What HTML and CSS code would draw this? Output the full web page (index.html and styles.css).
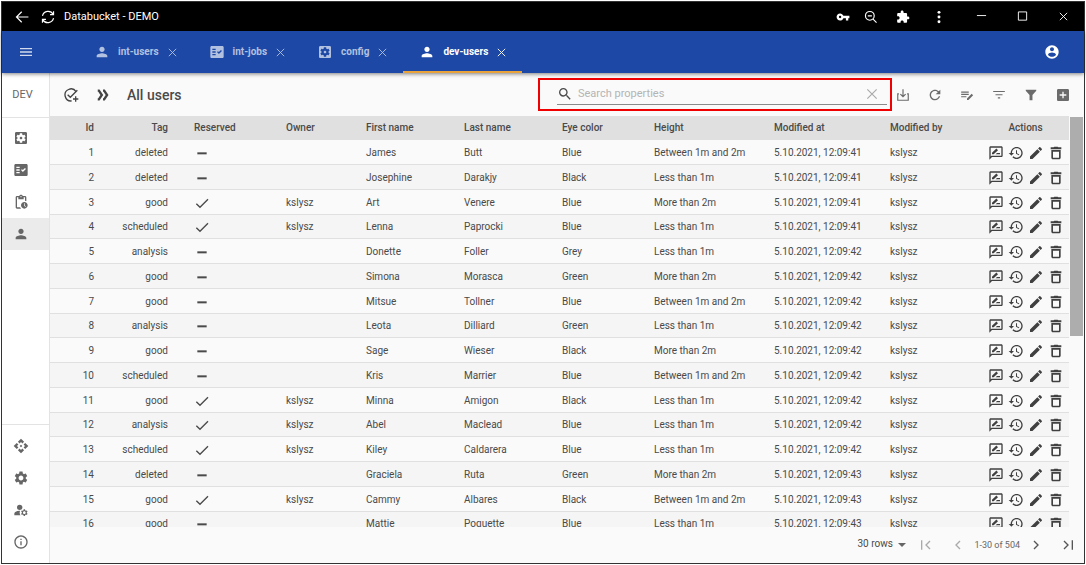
FILE: index.html
```html
<!DOCTYPE html>
<html lang="en">
<head>
<meta charset="utf-8">
<title>Databucket - DEMO</title>
<link rel="stylesheet" href="styles.css">
</head>
<body>
<svg class="sprite" aria-hidden="true">
  <symbol id="person" viewBox="0 0 24 24"><path d="M12 12c2.21 0 4-1.79 4-4s-1.79-4-4-4-4 1.79-4 4 1.79 4 4 4zm0 2c-2.67 0-8 1.34-8 4v2h16v-2c0-2.66-5.33-4-8-4z"/></symbol>
  <symbol id="factcheck" viewBox="0 0 24 24"><path fill-rule="evenodd" d="M20 3H4c-1.1 0-2 .9-2 2v14c0 1.1.9 2 2 2h16c1.1 0 2-.9 2-2V5c0-1.1-.9-2-2-2zM10 17H5v-2h5v2zm0-4H5v-2h5v2zm0-4H5V7h5v2zm4.82 6L12 12.16l1.41-1.41 1.41 1.42L17.99 9l1.42 1.42L14.82 15z"/></symbol>
  <symbol id="config" viewBox="0 0 24 24"><path d="M12 10c-1.1 0-2 .9-2 2s.9 2 2 2 2-.9 2-2-.9-2-2-2zm7-7H5c-1.11 0-2 .9-2 2v14c0 1.1.89 2 2 2h14c1.11 0 2-.9 2-2V5c0-1.1-.89-2-2-2zm-1.75 9c0 .23-.02.46-.05.68l1.48 1.16c.13.11.17.3.08.45l-1.4 2.42c-.09.15-.27.21-.43.15l-1.74-.7c-.36.28-.76.51-1.18.69l-.26 1.85c-.03.17-.18.3-.35.3h-2.8c-.17 0-.32-.13-.35-.29l-.26-1.85c-.43-.18-.82-.41-1.18-.69l-1.74.7c-.16.06-.34 0-.43-.15l-1.4-2.42c-.09-.15-.05-.34.08-.45l1.48-1.16c-.03-.23-.05-.46-.05-.69 0-.23.02-.46.05-.68l-1.48-1.16c-.13-.11-.17-.3-.08-.45l1.4-2.42c.09-.15.27-.21.43-.15l1.74.7c.36-.28.76-.51 1.18-.69l.26-1.85c.03-.17.18-.3.35-.3h2.8c.17 0 .32.13.35.29l.26 1.85c.43.18.82.41 1.18.69l1.74-.7c.16-.06.34 0 .43.15l1.4 2.42c.09.15.05.34-.08.45l-1.48 1.16c.03.23.05.46.05.69z"/></symbol>
  <symbol id="pending" viewBox="0 0 24 24"><path d="M17 12c-2.76 0-5 2.24-5 5s2.24 5 5 5 5-2.24 5-5-2.24-5-5-5zm1.65 7.35L16.5 17.2V14h1v2.79l1.85 1.85-.7.71zM18 3h-3.18C14.4 1.84 13.3 1 12 1s-2.4.84-2.82 2H6c-1.1 0-2 .9-2 2v15c0 1.1.9 2 2 2h6.11c-.59-.57-1.07-1.25-1.42-2H6V5h2v3h8V5h2v5.08c.71.1 1.38.31 2 .6V5c0-1.1-.9-2-2-2zm-6 2c-.55 0-1-.45-1-1s.45-1 1-1 1 .45 1 1-.45 1-1 1z"/></symbol>
  <symbol id="api" viewBox="0 0 24 24"><path d="M14 12l-2 2-2-2 2-2 2 2zm-2-6l2.12 2.12 2.5-2.5L12 1 7.38 5.62l2.5 2.5L12 6zm-6 6l2.12-2.12-2.5-2.5L1 12l4.62 4.62 2.5-2.5L6 12zm12 0l-2.12 2.12 2.5 2.5L23 12l-4.62-4.62-2.5 2.5L18 12zm-6 6l-2.12-2.12-2.5 2.5L12 23l4.62-4.62-2.5-2.5L12 18z"/></symbol>
  <symbol id="gear" viewBox="0 0 24 24"><path d="M19.14 12.94c.04-.3.06-.61.06-.94 0-.32-.02-.64-.07-.94l2.03-1.58c.18-.14.23-.41.12-.61l-1.92-3.32c-.12-.22-.37-.29-.59-.22l-2.39.96c-.5-.38-1.03-.7-1.62-.94l-.36-2.54c-.04-.24-.24-.41-.48-.41h-3.84c-.24 0-.43.17-.47.41l-.36 2.54c-.59.24-1.13.57-1.62.94l-2.39-.96c-.22-.08-.47 0-.59.22L2.74 8.87c-.12.21-.08.47.12.61l2.03 1.58c-.05.3-.09.63-.09.94s.02.64.07.94l-2.03 1.58c-.18.14-.23.41-.12.61l1.92 3.32c.12.22.37.29.59.22l2.39-.96c.5.38 1.03.7 1.62.94l.36 2.54c.05.24.24.41.48.41h3.84c.24 0 .44-.17.47-.41l.36-2.54c.59-.24 1.13-.56 1.62-.94l2.39.96c.22.08.47 0 .59-.22l1.92-3.32c.12-.22.07-.47-.12-.61l-2.01-1.58zM12 15.6c-1.98 0-3.6-1.62-3.6-3.6s1.62-3.6 3.6-3.6 3.6 1.62 3.6 3.6-1.62 3.6-3.6 3.6z"/></symbol>
  <symbol id="accounts" viewBox="0 0 24 24"><circle cx="10" cy="8" r="4"/><path d="M10.67 13.02C10.45 13.01 10.23 13 10 13c-2.42 0-4.68.67-6.61 1.82C2.51 15.34 2 16.32 2 17.35V20h9.26c-.79-1.13-1.26-2.51-1.26-4 0-1.07.25-2.07.67-2.98z"/><path d="M20.75 16c0-.22-.03-.42-.06-.63l1.14-1.01-1-1.73-1.45.49c-.32-.27-.68-.48-1.08-.63L18 11h-2l-.3 1.49c-.4.15-.76.36-1.08.63l-1.45-.49-1 1.73 1.14 1.01c-.03.21-.06.41-.06.63s.03.42.06.63l-1.14 1.01 1 1.73 1.45-.49c.32.27.68.48 1.08.63L16 21h2l.3-1.49c.4-.15.76-.36 1.08-.63l1.45.49 1-1.73-1.14-1.01c.03-.21.06-.41.06-.63zM17 18c-1.1 0-2-.9-2-2s.9-2 2-2 2 .9 2 2-.9 2-2 2z"/></symbol>
  <symbol id="info" viewBox="0 0 24 24"><path d="M11 7h2v2h-2zm0 4h2v6h-2zm1-9C6.48 2 2 6.48 2 12s4.48 10 10 10 10-4.48 10-10S17.52 2 12 2zm0 18c-4.41 0-8-3.59-8-8s3.59-8 8-8 8 3.59 8 8-3.59 8-8 8z"/></symbol>
  <symbol id="taskadd" viewBox="0 0 24 24"><path fill="none" stroke="currentColor" stroke-width="2" d="M19.6 7A9 9 0 1 0 13 20.900M7 11.500l4 4L21.500 5M19 14v8M15 18h8"/></symbol>
  <symbol id="forward" viewBox="0 0 24 24"><path fill="none" stroke="currentColor" stroke-width="4" d="M3 4.500h2l5 7.500-5 7.500H3M12 4.500h2l5 7.500-5 7.500h-2"/></symbol>
  <symbol id="search" viewBox="0 0 24 24"><path d="M15.500 14h-.79l-.28-.27A6.471 6.471 0 0 0 16 9.500 6.500 6.500 0 1 0 9.500 16c1.610 0 3.090-.59 4.230-1.570l.27.28v.79l5 4.990L20.490 19l-4.990-5zm-6 0C7.010 14 5 11.990 5 9.500S7.010 5 9.500 5 14 7.010 14 9.500 11.990 14 9.500 14z"/></symbol>
  <symbol id="zoomout" viewBox="0 0 24 24"><g fill="none" stroke="currentColor" stroke-width="2"><circle cx="10" cy="10" r="7.500"/><path d="M15.500 15.500l6 6M6.500 10h7"/></g></symbol>
  <symbol id="close" viewBox="0 0 24 24"><path fill="none" stroke="currentColor" stroke-width="2" d="M4 4l16 16M20 4L4 20"/></symbol>
  <symbol id="download" viewBox="0 0 24 24"><path fill="none" stroke="currentColor" stroke-width="2" d="M12 2v13M7.500 10.500l4.500 4.500 4.500-4.500M5 10H3v11h18V10h-2"/></symbol>
  <symbol id="refresh" viewBox="0 0 24 24"><path d="M17.650 6.350C16.200 4.900 14.210 4 12 4c-4.420 0-7.990 3.580-7.990 8s3.570 8 7.990 8c3.730 0 6.840-2.550 7.730-6h-2.080c-.82 2.330-3.040 4-5.650 4-3.310 0-6-2.690-6-6s2.690-6 6-6c1.660 0 3.140.69 4.220 1.780L13 11h7V4l-2.350 2.350z"/></symbol>
  <symbol id="editlist" viewBox="0 0 24 24"><path d="M2 6h13v2H2zM2 10h13v2H2zM2 14h9v2H2zM12 20.500V18l8-8 2.500 2.500-8 8z"/></symbol>
  <symbol id="filterlist" viewBox="0 0 24 24"><path d="M10 18h4v-2h-4v2zM2 5v2h20V5H2zm4 7.500h12v-2H6v2z"/></symbol>
  <symbol id="funnel" viewBox="0 0 24 24"><path d="M3 3h18v1.500L14.500 12v9h-5v-9L3 4.500z"/></symbol>
  <symbol id="addbox" viewBox="0 0 24 24"><path d="M19 3H5c-1.110 0-2 .9-2 2v14c0 1.100.89 2 2 2h14c1.100 0 2-.9 2-2V5c0-1.100-.9-2-2-2zm-2 10h-4v4h-2v-4H7v-2h4V7h2v4h4v2z"/></symbol>
  <symbol id="menu" viewBox="0 0 24 24"><path d="M3 18h18v-2H3v2zm0-5h18v-2H3v2zm0-7v2h18V6H3z"/></symbol>
  <symbol id="account" viewBox="0 0 24 24"><path d="M12 2C6.480 2 2 6.480 2 12s4.480 10 10 10 10-4.480 10-10S17.520 2 12 2zm0 3c1.660 0 3 1.340 3 3s-1.340 3-3 3-3-1.340-3-3 1.340-3 3-3zm0 14.200c-2.500 0-4.710-1.280-6-3.220.03-1.990 4-3.080 6-3.080 1.990 0 5.970 1.090 6 3.080-1.290 1.940-3.500 3.220-6 3.220z"/></symbol>
  <symbol id="key" viewBox="0 0 24 24"><path d="M12.650 10C11.830 7.670 9.610 6 7 6c-3.310 0-6 2.690-6 6s2.690 6 6 6c2.610 0 4.830-1.670 5.650-4H17v4h4v-4h2v-4H12.650zM7 14c-1.100 0-2-.9-2-2s.9-2 2-2 2 .9 2 2-.9 2-2 2z"/></symbol>
  <symbol id="puzzle" viewBox="0 0 24 24"><path d="M20.500 11H19V7c0-1.100-.9-2-2-2h-4V3.500C13 2.120 11.880 1 10.500 1S8 2.120 8 3.500V5H4c-1.100 0-1.990.9-1.990 2v3.800H3.500c1.490 0 2.700 1.210 2.700 2.700s-1.210 2.700-2.700 2.700H2V20c0 1.100.9 2 2 2h3.800v-1.500c0-1.490 1.210-2.700 2.700-2.700 1.490 0 2.700 1.210 2.700 2.700V22H17c1.100 0 2-.9 2-2v-4h1.500c1.380 0 2.500-1.120 2.500-2.500S21.880 11 20.500 11z"/></symbol>
  <symbol id="dots" viewBox="0 0 24 24"><circle cx="12" cy="4" r="2.500"/><circle cx="12" cy="12" r="2.500"/><circle cx="12" cy="20" r="2.500"/></symbol>
  <symbol id="back" viewBox="0 0 24 24"><path fill="none" stroke="currentColor" stroke-width="2" d="M23 12H3M11.500 3L2.500 12l9 9"/></symbol>
  <symbol id="reload" viewBox="0 0 24 24"><path fill="none" stroke="currentColor" stroke-width="2" d="M2.500 10A10 10 0 0 1 21 7.500M21.500 2v6h-6M21.500 14A10 10 0 0 1 3 16.500M2.500 22v-6h6"/></symbol>
  <symbol id="minimize" viewBox="0 0 24 24"><path d="M2 9h20v2H2z"/></symbol>
  <symbol id="maximize" viewBox="0 0 24 24"><path fill="none" stroke="currentColor" stroke-width="2" d="M3 2h18v18H3z"/></symbol>
  <symbol id="check" viewBox="0 0 24 24"><path fill="none" stroke="currentColor" stroke-width="2" d="M3.500 13l5.500 5.500L21 6.500"/></symbol>
  <symbol id="dash" viewBox="0 0 24 24"><path d="M5 11h14v3H5z"/></symbol>
  <symbol id="review" viewBox="0 0 24 24"><path fill-rule="evenodd" d="M20 2H4c-1.100 0-2 .9-2 2v18l4-4h14c1.100 0 2-.9 2-2V4c0-1.100-.9-2-2-2zm0 14H5.170L4 17.170V4h16v12z"/><path d="M11.500 14H18v-2h-4.500zM6 14h2.500l6.500-6.300L12.600 5.300 6 11.700z"/></symbol>
  <symbol id="history" viewBox="0 0 24 24"><path d="M13 3c-4.970 0-9 4.030-9 9H1l3.890 3.890.07.14L9 12H6c0-3.870 3.130-7 7-7s7 3.130 7 7-3.130 7-7 7c-1.930 0-3.680-.79-4.940-2.060l-1.420 1.420C8.270 19.990 10.510 21 13 21c4.970 0 9-4.030 9-9s-4.030-9-9-9zm-1 5v5l4.280 2.540.72-1.210-3.500-2.080V8H12z"/></symbol>
  <symbol id="edit" viewBox="0 0 24 24"><path d="M3 17.250V21h3.750L17.810 9.940l-3.750-3.750L3 17.250zM20.710 7.040c.39-.39.39-1.020 0-1.410l-2.340-2.340c-.39-.39-1.020-.39-1.410 0l-1.830 1.830 3.750 3.750 1.830-1.830z"/></symbol>
  <symbol id="trash" viewBox="0 0 24 24"><path fill-rule="evenodd" d="M5 19c0 1.100.9 2.500 2.500 2.500h9c1.600 0 2.500-1.400 2.500-2.500V7.500H5zM7.500 10h9v9h-9zM15.500 3.500l-1-1h-5l-1 1H4v3h16v-3z"/></symbol>
  <symbol id="first" viewBox="0 0 24 24"><path fill="none" stroke="currentColor" stroke-width="2" d="M5.500 5v14M18 6l-6 6 6 6"/></symbol>
  <symbol id="prev" viewBox="0 0 24 24"><path fill="none" stroke="currentColor" stroke-width="2" d="M15 6l-6 6 6 6"/></symbol>
  <symbol id="next" viewBox="0 0 24 24"><path fill="none" stroke="currentColor" stroke-width="2" d="M9 6l6 6-6 6"/></symbol>
  <symbol id="last" viewBox="0 0 24 24"><path fill="none" stroke="currentColor" stroke-width="2" d="M6 6l6 6-6 6M18.500 5v14"/></symbol>
  <symbol id="caret" viewBox="0 0 24 24"><path d="M6 9l6 6 6-6z"/></symbol>
</svg>

<div class="window">
  <header class="titlebar">
    <button class="nav-button" aria-label="Back"><svg class="icon small"><use href="#back"/></svg></button>
    <button class="nav-button" aria-label="Reload"><svg class="icon small"><use href="#reload"/></svg></button>
    <span class="window-title">Databucket - DEMO</span>
    <div class="browser-tools">
      <button aria-label="Passwords"><svg class="icon small"><use href="#key"/></svg></button>
      <button aria-label="Zoom"><svg class="icon small"><use href="#zoomout"/></svg></button>
      <button class="wide" aria-label="Extensions"><svg class="icon small"><use href="#puzzle"/></svg></button>
      <button class="wide" aria-label="More"><svg class="icon small"><use href="#dots"/></svg></button>
    </div>
    <div class="window-controls">
      <button aria-label="Minimize"><svg class="icon tiny"><use href="#minimize"/></svg></button>
      <button aria-label="Maximize"><svg class="icon tiny"><use href="#maximize"/></svg></button>
      <button aria-label="Close window"><svg class="icon tiny"><use href="#close"/></svg></button>
    </div>
  </header>

  <div class="appbar">
    <button class="menu-button" aria-label="Menu"><svg class="icon"><use href="#menu"/></svg></button>
    <nav class="tabs">
      <div class="tab"><svg class="icon"><use href="#person"/></svg><a href="#int-users">int-users</a><button aria-label="Close int-users"><svg class="icon tiny"><use href="#close"/></svg></button></div>
      <div class="tab"><svg class="icon"><use href="#factcheck"/></svg><a href="#int-jobs">int-jobs</a><button aria-label="Close int-jobs"><svg class="icon tiny"><use href="#close"/></svg></button></div>
      <div class="tab"><svg class="icon"><use href="#config"/></svg><a href="#config-tab">config</a><button aria-label="Close config"><svg class="icon tiny"><use href="#close"/></svg></button></div>
      <div class="tab active"><svg class="icon"><use href="#person"/></svg><a href="#dev-users">dev-users</a><button aria-label="Close dev-users"><svg class="icon tiny"><use href="#close"/></svg></button></div>
    </nav>
    <button class="account-button" aria-label="Account"><svg class="icon"><use href="#account"/></svg></button>
  </div>

  <div class="workspace">
    <aside class="sidebar">
      <button class="project">DEV</button>
      <nav class="side-list">
        <button aria-label="Configuration"><svg class="icon"><use href="#config"/></svg></button>
        <button aria-label="Jobs"><svg class="icon"><use href="#factcheck"/></svg></button>
        <button aria-label="Pending"><svg class="icon"><use href="#pending"/></svg></button>
        <button class="active" aria-label="Users"><svg class="icon"><use href="#person"/></svg></button>
      </nav>
      <nav class="side-list bottom">
        <button aria-label="API"><svg class="icon"><use href="#api"/></svg></button>
        <button aria-label="Settings"><svg class="icon"><use href="#gear"/></svg></button>
        <button aria-label="Manage accounts"><svg class="icon"><use href="#accounts"/></svg></button>
        <button aria-label="Info"><svg class="icon"><use href="#info"/></svg></button>
      </nav>
    </aside>

    <main class="content">
      <div class="toolbar">
        <button class="tool dark" aria-label="Reserve"><svg class="icon"><use href="#taskadd"/></svg></button>
        <button class="tool dark" aria-label="Views"><svg class="icon small"><use href="#forward"/></svg></button>
        <h1>All users</h1>
        <div class="search-area">
          <div class="search-field">
            <svg class="icon"><use href="#search"/></svg>
            <input type="text" placeholder="Search properties" aria-label="Search properties">
            <button aria-label="Clear search"><svg class="icon small"><use href="#close"/></svg></button>
          </div>
        </div>
        <button class="tool" aria-label="Export"><svg class="icon small"><use href="#download"/></svg></button>
        <button class="tool" aria-label="Refresh"><svg class="icon"><use href="#refresh"/></svg></button>
        <button class="tool" aria-label="Edit rows"><svg class="icon small"><use href="#editlist"/></svg></button>
        <button class="tool" aria-label="Filter rules"><svg class="icon small"><use href="#filterlist"/></svg></button>
        <button class="tool" aria-label="Filter"><svg class="icon small"><use href="#funnel"/></svg></button>
        <button class="tool" aria-label="Add"><svg class="icon"><use href="#addbox"/></svg></button>
      </div>

      <div class="table-area">
        <table class="users">
          <thead>
            <tr><th class="c-id">Id</th><th class="c-tag">Tag</th><th class="c-reserved">Reserved</th><th class="c-owner">Owner</th><th class="c-name">First name</th><th class="c-name">Last name</th><th class="c-eye">Eye color</th><th class="c-height">Height</th><th class="c-date">Modified at</th><th class="c-by">Modified by</th><th class="c-actions">Actions</th></tr>
          </thead>
          <tbody id="rows"></tbody>
        </table>
        <div class="scrollbar"><div class="thumb"></div></div>
      </div>

      <footer class="pager">
        <div class="page-size">
          <select aria-label="Rows per page"><option>30 rows</option></select>
          <svg class="icon"><use href="#caret"/></svg>
        </div>
        <button disabled aria-label="First page"><svg class="icon"><use href="#first"/></svg></button>
        <button disabled aria-label="Previous page"><svg class="icon"><use href="#prev"/></svg></button>
        <span class="range">1-30 of 504</span>
        <button aria-label="Next page"><svg class="icon"><use href="#next"/></svg></button>
        <button aria-label="Last page"><svg class="icon"><use href="#last"/></svg></button>
      </footer>
    </main>
  </div>
</div>
<script src="script.js"></script>
</body>
</html>
```

FILE: styles.css
```css
* { box-sizing: border-box; }

body {
  margin: 0;
  height: 100vh;
  padding: 1px;
  background: #fff;
  color: #4a4a4a;
  font: 10px/16px Roboto, "Liberation Sans", sans-serif;
}

button {
  display: flex;
  align-items: center;
  justify-content: center;
  padding: 0;
  border: 0;
  background: none;
  color: inherit;
  font: inherit;
}

.sprite { display: none; }

.icon {
  display: block;
  flex: none;
  width: 16px;
  height: 16px;
  fill: currentColor;
}
.icon.small { width: 14px; height: 14px; }
.icon.tiny { width: 11px; height: 11px; }

.window {
  display: flex;
  flex-direction: column;
  height: 100%;
  border: 1px solid #333;
  background: #fafafa;
}

/* Title bar */
.titlebar {
  display: flex;
  align-items: center;
  flex: none;
  height: 29px;
  padding-left: 7px;
  background: #000;
  color: #fff;
}
.nav-button { width: 26px; height: 28px; }
.window-title { margin-left: 3px; font-size: 11px; }
.browser-tools { display: flex; margin: 0 4px 0 auto; }
.browser-tools button { width: 28px; height: 28px; }
.browser-tools .wide { width: 36px; }
.window-controls { display: flex; }
.window-controls button { width: 41px; height: 28px; }

/* Application bar */
.appbar {
  position: relative;
  display: flex;
  flex: none;
  height: 42px;
  background: #1e48a5;
  color: #fff;
  box-shadow: 0 1px 4px rgba(0, 0, 0, 0.5);
}
.menu-button { width: 48px; opacity: 0.8; }
.tabs { display: flex; margin-left: 28px; }
.tab {
  display: flex;
  align-items: center;
  gap: 8px;
  padding: 2px 15px 0 16px;
  border-bottom: 2px solid transparent;
  color: #b3c1e0;
  font-weight: 700;
}
.tab.active { border-color: #e8a33a; color: #fff; }
.tab a { color: inherit; text-decoration: none; }
.account-button { width: 32px; margin: 0 16px 0 auto; }

.workspace { display: flex; flex: 1; min-height: 0; }

/* Sidebar */
.sidebar {
  display: flex;
  flex-direction: column;
  flex: none;
  width: 48px;
  border-right: 1px solid #e3e3e3;
  background: #fff;
  color: #666;
}
.project {
  height: 45px;
  padding-right: 6px;
  border-bottom: 1px solid #e3e3e3;
  font-size: 11px;
}
.side-list { padding: 4px 0; }
.side-list button { width: 100%; height: 32px; padding-right: 10px; }
.side-list .active { background: #ebebeb; }
.side-list.bottom {
  margin-top: auto;
  border-top: 1px solid #e3e3e3;
  padding: 5px 0;
}

/* Main area */
.content {
  display: flex;
  flex: 1;
  flex-direction: column;
  min-width: 0;
}
.toolbar {
  display: flex;
  align-items: center;
  flex: none;
  height: 43px;
  padding: 0 5px;
}
.tool { width: 32px; height: 32px; color: #6b6b6b; }
.tool.dark { color: #444; }
.toolbar h1 {
  margin: 0 auto 0 8px;
  font-size: 14px;
  font-weight: 500;
  line-height: 20px;
}
.search-area {
  position: relative;
  width: 350px;
  padding-left: 20px;
}
.search-area::after {
  content: "";
  position: absolute;
  inset: -6px -5px -6px 1px;
  border: 2px solid #f00000;
  pointer-events: none;
}
.search-field {
  display: flex;
  align-items: center;
  height: 21px;
  padding-right: 8px;
  border-bottom: 1px solid #8a8a8a;
}
.search-field input {
  flex: 1;
  min-width: 0;
  padding: 0 5px;
  border: 0;
  outline: 0;
  background: none;
  font: inherit;
  font-size: 11px;
}
.search-field input::placeholder { color: #b4b4b4; }
.search-field button { color: #aaa; }

/* Table */
.table-area {
  display: flex;
  align-items: flex-start;
  flex: 1;
  min-height: 0;
  overflow: hidden;
}
.users {
  flex: 1;
  table-layout: fixed;
  border-collapse: separate;
  border-spacing: 0;
}
.users th,
.users td {
  height: 25px;
  padding: 1px 0 0 16px;
  border-bottom: 1px solid #e0e0e0;
  font-weight: 400;
  text-align: left;
  white-space: nowrap;
}
.users th { height: 24px; padding-top: 0; background: #e0e0e0; font-weight: 500; }
.users tbody tr:nth-child(4n) td { height: 24px; }
.users tbody tr:nth-child(even) { background: #f5f5f5; }
.users .c-id,
.users .c-tag { padding-left: 0; padding-right: 10px; text-align: right; }
.c-id { width: 54px; }
.c-tag { width: 74px; }
.c-reserved { width: 92px; }
.c-owner { width: 80px; }
.c-name { width: 98px; }
.c-eye { width: 92px; }
.c-height { width: 120px; }
.c-date { width: 116px; }
.c-by { width: 106px; }
.c-actions { width: 89px; }
.users .c-actions { padding-left: 2px; text-align: center; }
.actions { display: flex; justify-content: center; gap: 4px; color: #404040; }

.scrollbar { flex: none; width: 15px; padding: 1px; }
.thumb { height: 219px; background: #adadad; }

/* Pager */
.pager {
  display: flex;
  align-items: center;
  justify-content: flex-end;
  flex: none;
  height: 36px;
  color: #666;
}
.pager button { width: 32px; height: 32px; color: #555; }
.pager button:disabled { color: #aaa; }
.page-size { display: flex; align-items: center; }
.page-size select {
  appearance: none;
  width: 37px;
  padding: 0 0 2px;
  border: 0;
  background: none;
  color: #4a4a4a;
  font: inherit;
}
.range { font-size: 9px; }
```

FILE: script.js
```js
const users = [
  [1, "deleted", false, "James", "Butt", "Blue", "Between 1m and 2m", "12:09:41"],
  [2, "deleted", false, "Josephine", "Darakjy", "Black", "Less than 1m", "12:09:41"],
  [3, "good", true, "Art", "Venere", "Blue", "More than 2m", "12:09:41"],
  [4, "scheduled", true, "Lenna", "Paprocki", "Blue", "Less than 1m", "12:09:41"],
  [5, "analysis", false, "Donette", "Foller", "Grey", "Less than 1m", "12:09:42"],
  [6, "good", false, "Simona", "Morasca", "Green", "More than 2m", "12:09:42"],
  [7, "good", false, "Mitsue", "Tollner", "Blue", "Between 1m and 2m", "12:09:42"],
  [8, "analysis", false, "Leota", "Dilliard", "Green", "Less than 1m", "12:09:42"],
  [9, "good", false, "Sage", "Wieser", "Black", "More than 2m", "12:09:42"],
  [10, "scheduled", false, "Kris", "Marrier", "Blue", "Between 1m and 2m", "12:09:42"],
  [11, "good", true, "Minna", "Amigon", "Black", "Less than 1m", "12:09:42"],
  [12, "analysis", true, "Abel", "Maclead", "Blue", "Less than 1m", "12:09:42"],
  [13, "scheduled", true, "Kiley", "Caldarera", "Blue", "Less than 1m", "12:09:42"],
  [14, "deleted", false, "Graciela", "Ruta", "Green", "More than 2m", "12:09:43"],
  [15, "good", true, "Cammy", "Albares", "Black", "Between 1m and 2m", "12:09:43"],
  [16, "good", false, "Mattie", "Poquette", "Blue", "Less than 1m", "12:09:43"]
];

const icon = (name) => `<svg class="icon"><use href="#${name}"/></svg>`;

const actions = [["review", "Details"], ["history", "History"], ["edit", "Edit"], ["trash", "Delete"]]
  .map(([name, label]) => `<button aria-label="${label}">${icon(name)}</button>`)
  .join("");

document.getElementById("rows").innerHTML = users.map(
  ([id, tag, reserved, first, last, eye, height, time]) => `<tr>
    <td class="c-id">${id}</td><td class="c-tag">${tag}</td>
    <td>${icon(reserved ? "check" : "dash")}</td><td>${reserved ? "kslysz" : ""}</td>
    <td>${first}</td><td>${last}</td><td>${eye}</td><td>${height}</td>
    <td>5.10.2021, ${time}</td><td>kslysz</td>
    <td class="c-actions"><div class="actions">${actions}</div></td>
  </tr>`
).join("");
```
